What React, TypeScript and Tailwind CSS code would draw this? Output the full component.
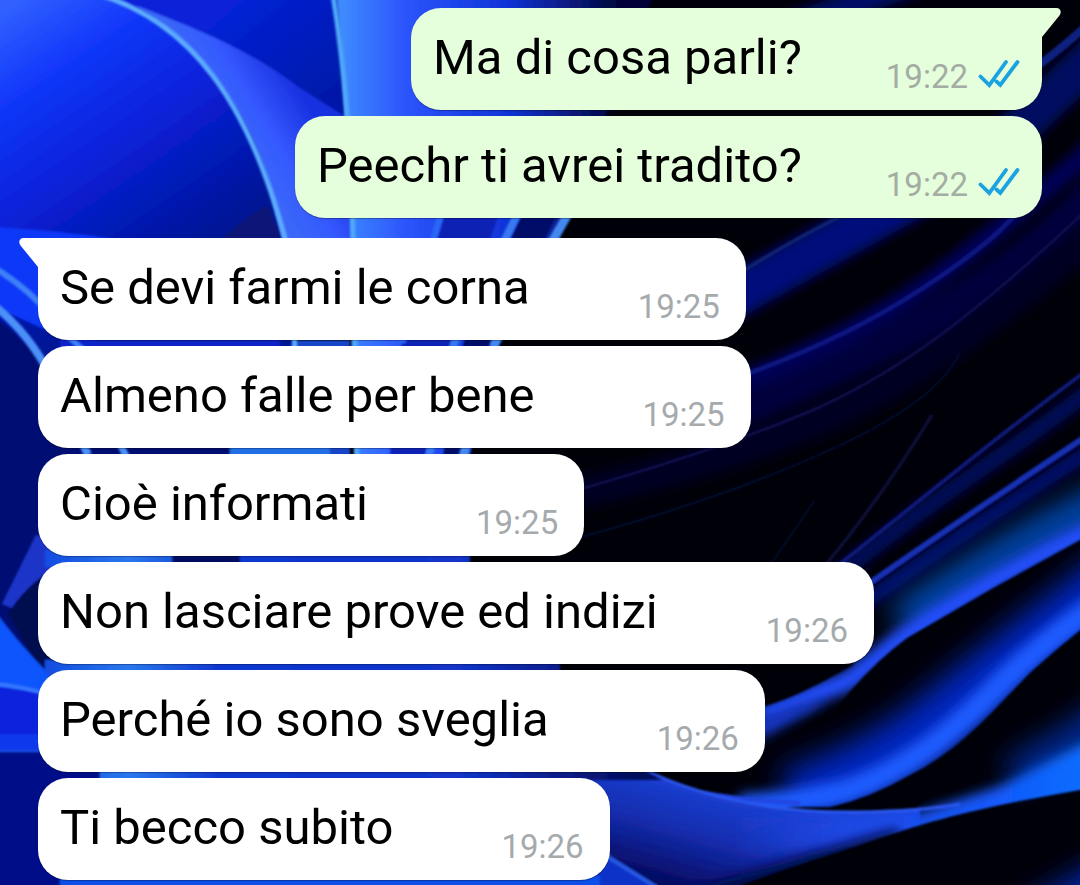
import clsx from 'clsx'

interface Message {
  id: number
  text: string
  time: string
}

interface MessageGroup {
  side: 'in' | 'out'
  messages: Message[]
}

const GROUPS: MessageGroup[] = [
  {
    side: 'out',
    messages: [
      { id: 1, text: 'Ma di cosa parli?', time: '19:22' },
      { id: 2, text: 'Peechr ti avrei tradito?', time: '19:22' },
    ],
  },
  {
    side: 'in',
    messages: [
      { id: 3, text: 'Se devi farmi le corna', time: '19:25' },
      { id: 4, text: 'Almeno falle per bene', time: '19:25' },
      { id: 5, text: 'Cioè informati', time: '19:25' },
      { id: 6, text: 'Non lasciare prove ed indizi', time: '19:26' },
      { id: 7, text: 'Perché io sono sveglia', time: '19:26' },
      { id: 8, text: 'Ti becco subito', time: '19:26' },
    ],
  },
]

function Wallpaper() {
  return (
    <svg
      className="absolute inset-0 h-full w-full"
      viewBox="0 0 1080 885"
      preserveAspectRatio="xMidYMid slice"
      aria-hidden="true"
    >
      <defs>
        <filter id="soft" filterUnits="userSpaceOnUse" x="-50" y="-50" width="1180" height="985">
          <feGaussianBlur stdDeviation="1.2" />
        </filter>
        <filter id="haze" filterUnits="userSpaceOnUse" x="-80" y="-80" width="1240" height="1045">
          <feGaussianBlur stdDeviation="6" />
        </filter>
        <filter id="glow" filterUnits="userSpaceOnUse" x="-80" y="-80" width="1240" height="1045">
          <feGaussianBlur stdDeviation="15" />
        </filter>
        <linearGradient id="petal" gradientUnits="userSpaceOnUse" x1="20" y1="0" x2="190" y2="250">
          <stop offset="0" stopColor="#3060ff" />
          <stop offset="0.25" stopColor="#1238fa" />
          <stop offset="0.55" stopColor="#0822dc" />
          <stop offset="1" stopColor="#041496" />
        </linearGradient>
        <linearGradient id="fold" gradientUnits="userSpaceOnUse" x1="300" y1="90" x2="235" y2="130">
          <stop offset="0" stopColor="#1830e0" />
          <stop offset="0.6" stopColor="#3458ff" />
          <stop offset="1" stopColor="#3a66f8" />
        </linearGradient>
        <linearGradient id="back" gradientUnits="userSpaceOnUse" x1="230" y1="0" x2="320" y2="110">
          <stop offset="0" stopColor="#0722d8" />
          <stop offset="1" stopColor="#0319a8" />
        </linearGradient>
        <linearGradient id="column" gradientUnits="userSpaceOnUse" x1="335" y1="0" x2="620" y2="0">
          <stop offset="0" stopColor="#4090ff" />
          <stop offset="0.25" stopColor="#2c54fc" />
          <stop offset="0.6" stopColor="#1034d8" />
          <stop offset="1" stopColor="#020538" />
        </linearGradient>
        <linearGradient id="sheet" gradientUnits="userSpaceOnUse" x1="700" y1="780" x2="670" y2="885">
          <stop offset="0" stopColor="#1c42d8" />
          <stop offset="0.5" stopColor="#142cac" />
          <stop offset="1" stopColor="#040a60" />
        </linearGradient>
        <linearGradient id="sheetRight" gradientUnits="userSpaceOnUse" x1="720" y1="0" x2="1080" y2="0">
          <stop offset="0" stopColor="#1a3cd0" stopOpacity="0" />
          <stop offset="0.35" stopColor="#1e48e4" />
          <stop offset="0.75" stopColor="#1458fa" />
          <stop offset="1" stopColor="#0a6cff" />
        </linearGradient>
        <linearGradient id="strip" gradientUnits="userSpaceOnUse" x1="38" y1="0" x2="640" y2="0">
          <stop offset="0" stopColor="#1048e0" />
          <stop offset="0.15" stopColor="#2a78ec" />
          <stop offset="0.3" stopColor="#1038d0" />
          <stop offset="0.7" stopColor="#1234c8" />
          <stop offset="1" stopColor="#040a58" />
        </linearGradient>
        <clipPath id="bandA">
          <path d="M1120 300V520L1080 540L993 588L907 638Q850 680 800 760H700V714L766 706Q800 696 853 665L840 560Z" />
        </clipPath>
        <clipPath id="bandB">
          <path d="M1120 400V600Q1075 632 1033 670C1000 702 965 748 910 775Q870 798 830 807H700V792L600 770V500Z" />
        </clipPath>
        <clipPath id="bandC">
          <path d="M1120 560V781L1080 790C1020 801 960 810 867 842C820 858 780 870 700 900L560 900V740L650 772C720 806 800 813 860 812L915 809L960 770L1060 600Z" />
        </clipPath>
      </defs>

      <rect width="1080" height="885" fill="#000008" />

      {/* folds on the dark side */}
      <g fill="none" filter="url(#haze)">
        <path d="M700 290L800 235L880 190H970L890 235L740 318Z" fill="#020e7a" />
        <path d="M700 398Q850 340 930 282T1110 132" stroke="#020658" strokeWidth="20" />
        <path d="M700 425Q850 370 960 300T1120 160" stroke="#02033c" strokeWidth="34" />
        <path d="M540 500Q700 470 820 420T1120 210" stroke="#010224" strokeWidth="34" />
        <path d="M960 180Q1040 110 1110 40" stroke="#020c60" strokeWidth="40" />
        <path d="M800 605Q900 525 980 470T1110 375" stroke="#020a60" strokeWidth="16" />
        <path d="M840 620Q950 540 1110 438" stroke="#031078" strokeWidth="14" />
        <path d="M530 122Q700 60 920 -20" stroke="#031068" strokeWidth="26" />
      </g>
      <g fill="none" filter="url(#soft)">
        <path d="M730 280Q785 243 850 212" stroke="#142878" strokeWidth="3" />
        <path d="M730 380Q840 342 920 290T1020 208" stroke="#0a1680" strokeWidth="5" />
        <path d="M570 492Q720 450 820 407C900 370 970 320 1095 202" stroke="#0c104c" strokeWidth="3" />
        <path d="M570 540Q720 500 830 450T960 352" stroke="#050728" strokeWidth="3" />
        <path d="M820 572Q880 500 932 415" stroke="#080b34" strokeWidth="4" />
        <path d="M770 565Q795 530 815 500" stroke="#050722" strokeWidth="3" />
        <path d="M820 580Q920 500 970 460T1090 368" stroke="#0e1a7c" strokeWidth="4" />
        <path d="M860 590Q960 520 1090 434" stroke="#1430b4" strokeWidth="6" />
        <path d="M1035 68Q1060 50 1095 18" stroke="#0c2080" strokeWidth="8" />
      </g>

      {/* bright bands, lowest first */}
      <g filter="url(#soft)">
        <g clipPath="url(#bandB)">
          <path d="M1130 570Q1000 670 940 720T790 800" fill="none" stroke="#0428c0" strokeWidth="60" filter="url(#glow)" />
          <path d="M1130 584Q1050 635 1000 685C950 735 910 768 850 790Q810 802 740 806" fill="none" stroke="#1c5cff" strokeWidth="24" filter="url(#haze)" />
        </g>
        <path d="M700 792Q740 800 800 803" fill="none" stroke="#2044e0" strokeWidth="4" />
        <path d="M1130 700Q1060 750 1020 770" fill="none" stroke="#0430b4" strokeWidth="26" strokeLinecap="round" filter="url(#glow)" />
        <g clipPath="url(#bandC)">
          <path d="M560 730L650 765C740 805 830 812 920 808V835C820 850 760 880 700 910L560 910Z" fill="url(#sheet)" />
          <path d="M740 818L860 818L920 812L1000 786L1130 718V800L1000 818L860 852L740 850Z" fill="url(#sheetRight)" filter="url(#haze)" />
          <path d="M680 905Q800 865 900 838" fill="none" stroke="#030848" strokeWidth="20" filter="url(#haze)" />
        </g>
        <path d="M1120 850L1000 920H1120Z" fill="#0428b0" filter="url(#glow)" />
        <path d="M640 768C720 806 800 813 860 812Q920 811 960 804" fill="none" stroke="#2c58f0" strokeWidth="3" />
        <path d="M590 845L664 892H560V840Z" fill="#0c30c8" />
        <path d="M600 852L664 892" stroke="#2858e4" strokeWidth="4" />
        <g clipPath="url(#bandA)">
          <path d="M1130 490Q1010 545 900 622" fill="none" stroke="#0450c0" strokeWidth="34" filter="url(#glow)" />
          <path d="M1130 512Q1000 572 900 640L850 680L760 716" fill="none" stroke="#2450ff" strokeWidth="20" filter="url(#haze)" />
          <path d="M750 720L800 704L830 700L760 740Z" fill="#1434c0" filter="url(#haze)" />
        </g>
      </g>

      {/* upper left bloom */}
      <g filter="url(#soft)">
        <path d="M325 -20H660L560 228L500 340L466 470H355Q350 200 333 -20Z" fill="url(#column)" />
        <path d="M80 -20H335Q345 60 350 240H280Z" fill="url(#back)" />
        <path d="M135 5C200 30 250 50 300 88L347 118L352 245H280Q265 90 135 5Z" fill="url(#fold)" />
        <path d="M-20 -20H60L100 -5C190 25 250 100 283 242L295 343V460H-20Z" fill="url(#petal)" />
        <path d="M215 245Q240 220 268 205L283 242Z" fill="#081878" />
        <path d="M-20 226Q80 232 130 242L90 350L-20 300Z" fill="#0838f8" />
        <path d="M60 350H280V340H60Z" fill="#0c24c8" />
        <path d="M295 340H350V470H220V447Z" fill="#1244c8" />
        <path d="M442 205L402 343L388 470H422L454 343L502 205Z" fill="#0820b4" />
        <path d="M526 205L463 343L440 470H460L492 343L562 205Z" fill="#020868" />
      </g>
      <g fill="none" filter="url(#soft)">
        <path d="M98 -6C190 22 250 100 288 250L295 350" stroke="#5cacff" strokeWidth="5" />
        <path d="M333 -5Q350 100 353 240T357 460" stroke="#50a8f8" strokeWidth="5" />
        <path d="M444 205L402 343" stroke="#2c66f8" strokeWidth="7" />
        <path d="M522 205L454 343L428 460" stroke="#3878f0" strokeWidth="8" />
        <path d="M573 205L495 343L462 460" stroke="#4488f0" strokeWidth="9" />
      </g>

      {/* lower left petals */}
      <g filter="url(#soft)">
        <path d="M-20 306Q60 360 100 460L180 570L40 760H-20Z" fill="#020a72" />
        <path d="M36 535L130 562L45 640L12 608L2 604Z" fill="#1a34c8" />
        <path d="M8 614Q25 585 58 566L150 600L60 700L38 665Z" fill="#050850" />
        <path d="M-20 590Q10 635 50 675V700L-20 690Z" fill="#0c54fc" />
        <path d="M-20 684L50 694V756H-20Z" fill="#0824dc" />
        <path d="M-20 734H50V751H-20Z" fill="#0a38ec" />
        <path d="M-20 751H120V900H-20Z" fill="#020a88" />
        <path d="M90 446H235V456H90Z" fill="#060c70" />
        <path d="M230 446H330V456H230Z" fill="#2070e8" />
        <path d="M45 550H470V567H45Z" fill="url(#strip)" />
        <path d="M172 550H240V567H172Z" fill="#060c60" />
        <path d="M45 660H560V675H45Z" fill="url(#strip)" />
        <path d="M100 768H640L662 780H100Z" fill="url(#strip)" />
        <path d="M60 876H600V900H60Z" fill="#0c50e8" />
      </g>
      <g fill="none" filter="url(#soft)">
        <path d="M-5 268Q30 290 50 315T84 350" stroke="#3c80f8" strokeWidth="6" />
        <path d="M-5 306Q30 335 50 375T88 455" stroke="#4c90f8" strokeWidth="8" />
        <path d="M118 440L128 460" stroke="#4c90f8" strokeWidth="7" />
        <path d="M-5 684Q20 686 50 695" stroke="#3878ff" strokeWidth="4" />
        <path d="M-5 751H50" stroke="#2050e8" strokeWidth="2" />
      </g>
    </svg>
  )
}

function ReadTicks() {
  return (
    <svg className="mb-[9px] h-7 w-[42px]" viewBox="0 0 42 28" fill="none" role="img" aria-label="Letto">
      <path
        d="M2.500 16.500L11.300 25L28 2M18.500 21.500L22.300 25L39.500 2"
        stroke="#1aa3e0"
        strokeWidth="3.8"
        strokeLinecap="round"
      />
    </svg>
  )
}

function Tail({ side }: { side: MessageGroup['side'] }) {
  return (
    <svg
      className={clsx(
        'absolute top-0 h-[31px] w-5',
        side === 'out' ? '-right-[19px] text-[#e5fedb]' : '-left-[19px] -scale-x-100 text-white',
      )}
      viewBox="0 0 20 31"
      fill="currentColor"
      aria-hidden="true"
    >
      <path d="M0 0H15.500C19.500 0 21 4 18.500 7.500L1 29V31H0Z" />
    </svg>
  )
}

interface BubbleProps {
  message: Message
  side: MessageGroup['side']
  first: boolean
}

function Bubble({ message, side, first }: BubbleProps) {
  const out = side === 'out'

  return (
    <li
      className={clsx(
        'relative flex items-end rounded-[30px] pt-5 pb-[13px] pl-[22px] shadow-[0_1px_1px_rgba(0,0,0,0.3)]',
        out ? 'gap-[84px] bg-[#e5fedb] pr-[22px]' : 'gap-[108px] bg-white pr-[26px]',
        first && (out ? 'rounded-tr-none' : 'rounded-tl-none'),
      )}
    >
      {first && <Tail side={side} />}
      <p className="pb-[9px] text-[49px] leading-[60px] text-black">{message.text}</p>
      <div className="flex items-end gap-[10px]">
        <time className={clsx('text-[33px] leading-10', out ? 'text-[#a3ada3]' : 'text-[#a5aaad]')}>
          {message.time}
        </time>
        {out && <ReadTicks />}
      </div>
    </li>
  )
}

export default function App() {
  return (
    <main className="relative min-h-screen overflow-hidden bg-[#000008] font-[Roboto,sans-serif]">
      <Wallpaper />
      <div className="relative flex flex-col gap-5 px-[38px] pt-2 pb-1">
        {GROUPS.map(group => (
          <ul
            key={group.side}
            className={clsx('flex flex-col gap-[6px]', group.side === 'out' ? 'items-end' : 'items-start')}
          >
            {group.messages.map((message, i) => (
              <Bubble key={message.id} message={message} side={group.side} first={i === 0} />
            ))}
          </ul>
        ))}
      </div>
    </main>
  )
}
